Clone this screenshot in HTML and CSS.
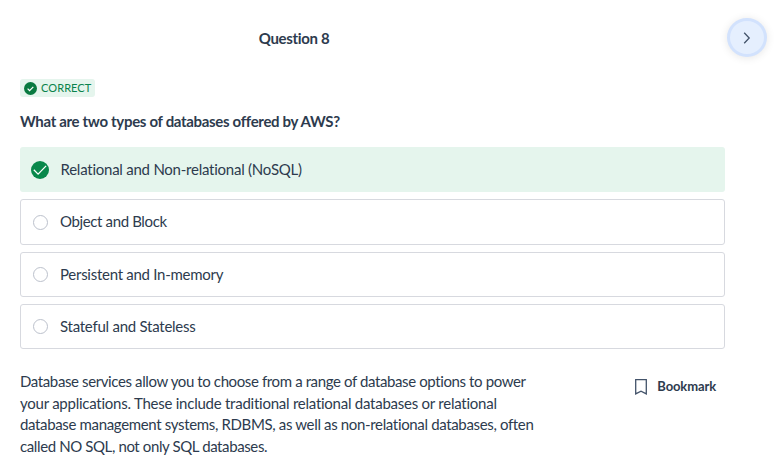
FILE: index.html
```html
<!DOCTYPE html>
<html lang="en">
<head>
<meta charset="utf-8">
<title>Question 8</title>
<link rel="stylesheet" href="styles.css">
</head>
<body>
<header class="header">
  <h1 class="title">Question 8</h1>
  <button class="next" aria-label="Next"><svg width="10" height="14" viewBox="0 0 10 14"><path d="M2.2 1.8 7.2 7l-5 5.2"/></svg></button>
</header>
<main class="main">
  <div class="badge"><svg width="13" height="13" viewBox="0 0 18 18"><circle cx="9" cy="9" r="9"/><path d="m5 9.2 2.7 2.7 5.2-5.2"/></svg><span>CORRECT</span></div>
  <h2 class="question">What are two types of databases offered by AWS?</h2>
  <div class="options">
    <div class="option correct"><svg class="check" width="18" height="18" viewBox="0 0 18 18"><circle cx="9" cy="9" r="9"/><path d="m2.8 8.8 4.3 4.3 8-8.2"/></svg><span>Relational and Non-relational (NoSQL)</span></div>
    <div class="option"><i class="radio"></i><span class="object">Object and Block</span></div>
    <div class="option"><i class="radio"></i><span class="memory">Persistent and In-memory</span></div>
    <div class="option"><i class="radio"></i><span class="state">Stateful and Stateless</span></div>
  </div>
  <div class="footer">
    <p class="explanation"><span class="line-one">Database services allow you to choose from a range of database options to power</span><br><span class="line-two">your applications. These include traditional relational databases or relational</span><br><span class="line-three">database management systems, RDBMS, as well as non-relational databases, often</span><br><span class="line-four">called NO SQL, not only SQL databases.</span></p>
    <div class="bookmark"><svg width="12" height="16" viewBox="0 0 12 16"><path d="M.7.7h10.6v14.2L6 12.2.7 14.9z"/></svg><span>Bookmark</span></div>
  </div>
</main>
</body>
</html>
```

FILE: styles.css
```css
* { box-sizing: border-box; }
body { margin: 0; background: #fff; color: #2d3b4e; font: 15px/22px Carlito, Lato, sans-serif; font-family: Lato, sans-serif; font-variant-ligatures: none; }
svg { flex: none; fill: none; }
.header { display: grid; grid-template-columns: 588px 1fr; height: 79px; align-items: start; }
.title { margin: 27px 0 0; font-size: 15px; line-height: 22px; letter-spacing: -.33px; text-align: center; }
.next { justify-self: end; margin: 18px 12px 0 0; width: 40px; height: 39px; padding: 0; border: 3px solid #d2e2fd; border-radius: 50%; background: #e5effe; display: flex; align-items: center; justify-content: center; box-shadow: 0 1px 8px #0000001a; }
.next path { stroke: #43536a; stroke-width: 1.3; }
.main { padding-left: 20px; width: 725px; }
.badge { display: flex; align-items: center; gap: 4px; width: 75px; height: 18px; padding-left: 4px; border-radius: 3px; background: #e5f5ed; color: #08834b; font-size: 11px; letter-spacing: .08px; }
.badge circle { fill: #087a40; }
.check circle { fill: #08884b; }
.badge path { stroke: #fff; stroke-width: 1.7; }
.check path { stroke: #fff; stroke-width: 1.3; }
.question { margin: 14px 0 15px; font-size: 15px; line-height: 21px; letter-spacing: -.32px; }
.options { display: grid; grid-template-rows: 45px 46px 45px 45px; gap: 7px; }
.option { display: flex; align-items: center; padding: 0 0 2px 12px; gap: 12px; border: 1px solid #d7d9df; border-radius: 3px; letter-spacing: -.32px; }
.option.correct { padding: 0 0 1px 11px; gap: 11.5px; border: 0; background: #e5f5ed; }
.correct span { letter-spacing: -.24px; }
.object { letter-spacing: -.37px; }
.memory { letter-spacing: -.27px; }
.state { letter-spacing: -.25px; }
.memory, .state { position: relative; top: .5px; }
.check { position: relative; top: 1px; }
.radio { width: 15px; height: 15px; border: 1px solid #bcc1cc; border-radius: 50%; position: relative; top: 1px; }
.footer { display: flex; justify-content: space-between; margin-top: 22px; }
.explanation { margin: 0; line-height: 21.7px; white-space: nowrap; }
.line-one { letter-spacing: -.385px; }
.line-two { letter-spacing: -.245px; }
.line-three { letter-spacing: -.345px; }
.line-four { letter-spacing: -.39px; }
.bookmark { display: flex; gap: 10px; align-items: center; height: 22px; margin: 5px 9px 0 0; font-size: 13px; font-weight: 700; letter-spacing: -.12px; }
.bookmark span { position: relative; top: -1px; }
.bookmark path { stroke: #43536a; stroke-width: 1.3; }
```
